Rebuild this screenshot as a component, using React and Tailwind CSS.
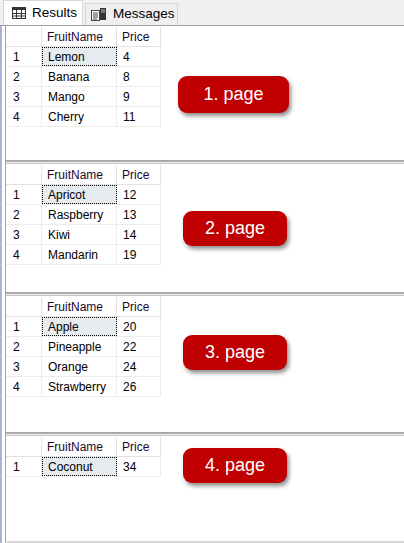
const pages = [
  {
    label: "1. page",
    panel: "h-[134px]",
    badge: "mt-[50px] ml-[17px] w-[111px] h-[37px]",
    rows: [
      ["Lemon", "4"],
      ["Banana", "8"],
      ["Mango", "9"],
      ["Cherry", "11"],
    ],
  },
  {
    label: "2. page",
    panel: "h-[128px]",
    badge: "mt-[47px] ml-[22px] w-[104px] h-[35px]",
    rows: [
      ["Apricot", "12"],
      ["Raspberry", "13"],
      ["Kiwi", "14"],
      ["Mandarin", "19"],
    ],
  },
  {
    label: "3. page",
    panel: "h-[136px]",
    badge: "mt-[39px] ml-[22px] w-[104px] h-[35px]",
    rows: [
      ["Apple", "20"],
      ["Pineapple", "22"],
      ["Orange", "24"],
      ["Strawberry", "26"],
    ],
  },
  {
    label: "4. page",
    panel: "h-[105px]",
    badge: "mt-[12px] ml-[22px] w-[104px] h-[35px]",
    rows: [["Coconut", "34"]],
  },
];

function GridIcon() {
  return (
    <svg width="14" height="12" viewBox="0 0 14 12" className="shrink-0">
      <rect x="0.5" y="0.5" width="13" height="11" fill="#fff" stroke="#333" />
      <rect x="0" y="0" width="14" height="3" fill="#333" />
      <path d="M0 6.5h14M0 9h14M4.5 3v9M9.5 3v9" stroke="#333" strokeWidth="1" />
    </svg>
  );
}

function MessagesIcon() {
  return (
    <svg width="16" height="13" viewBox="0 0 16 13" className="shrink-0">
      <rect x="0.5" y="2.5" width="8" height="10" fill="#fff" stroke="#444" />
      <path d="M2 5h5M2 7h5M2 9h5M2 11h4" stroke="#444" strokeWidth="1" />
      <rect x="9" y="0" width="6" height="12" fill="#333" />
      <path d="M10 2h4M10 4h4" stroke="#bbb" strokeWidth="1" />
    </svg>
  );
}

function ResultGrid({ rows }) {
  return (
    <div className="w-[155px] shrink-0 pt-[1px] text-[12px] text-black">
      <div className="flex h-[20px] border-b border-[#e3e3e3]">
        <div className="w-[36px] border-r border-[#e3e3e3]" />
        <div className="flex w-[75px] items-center border-r border-[#e3e3e3] pl-[5px] text-[#1a0a2a]">
          FruitName
        </div>
        <div className="flex w-[44px] items-center border-r border-[#e3e3e3] pl-[5px] text-[#1a0a2a]">
          Price
        </div>
      </div>
      {rows.map(([name, price], i) => (
        <div key={name} className="flex h-[20px] border-b border-[#ececec]">
          <div className="flex w-[36px] items-center border-r border-[#ececec] pl-[7px]">
            {i + 1}
          </div>
          {i === 0 ? (
            <div className="flex w-[75px] items-center border border-dotted border-black bg-[#e6ebf0] pl-[5px]">
              {name}
            </div>
          ) : (
            <div className="flex w-[75px] items-center border-r border-[#ececec] pl-[6px]">
              {name}
            </div>
          )}
          <div className="flex w-[44px] items-center border-r border-[#ececec] pl-[6px]">
            {price}
          </div>
        </div>
      ))}
    </div>
  );
}

function Badge({ label, className }) {
  return (
    <div
      className={
        "flex shrink-0 items-center justify-center rounded-[9px] bg-[#c00000] text-[18px] text-white shadow-[2px_3px_4px_rgba(0,0,0,0.45)] " +
        className
      }
    >
      {label}
    </div>
  );
}

export default function App() {
  return (
    <div
      className="relative h-[543px] w-[404px] overflow-hidden bg-white"
      style={{ fontFamily: '"Liberation Sans", Arial, sans-serif' }}
    >
      {/* tab strip */}
      <div className="flex h-[26px] items-end border-b border-[#a0a0a0] bg-[#f0f0f0] pl-[3px]">
        <div className="flex h-[25px] w-[80px] items-center gap-[6px] border border-b-0 border-[#d9d9d9] bg-white pl-[8px] text-[13.5px] text-black">
          <GridIcon />
          <span>Results</span>
        </div>
        <div className="ml-[2px] flex h-[22px] w-[93px] items-center gap-[6px] border border-b-0 border-[#d4d4d4] bg-[#efefef] pl-[5px] text-[13.5px] text-black">
          <MessagesIcon />
          <span>Messages</span>
        </div>
      </div>

      <div className="flex h-[517px]">
        <div className="w-[2px] bg-[#a9b4d6]" />
        <div className="w-[3px] bg-white" />
        <div className="flex flex-1 flex-col border-l border-[#a0a0a0] border-b-2 border-b-[#d6d6d6]">
          {pages.map((p, idx) => (
            <div key={p.label} className="flex flex-col">
              {idx > 0 && (
                <div className="h-[4px] border-t-2 border-b border-t-[#a9a9a9] border-b-[#c4c4c4] bg-[#f2f2f2]" />
              )}
              <div className={"flex " + p.panel}>
                <ResultGrid rows={p.rows} />
                <Badge label={p.label} className={p.badge} />
              </div>
            </div>
          ))}
        </div>
      </div>
    </div>
  );
}
